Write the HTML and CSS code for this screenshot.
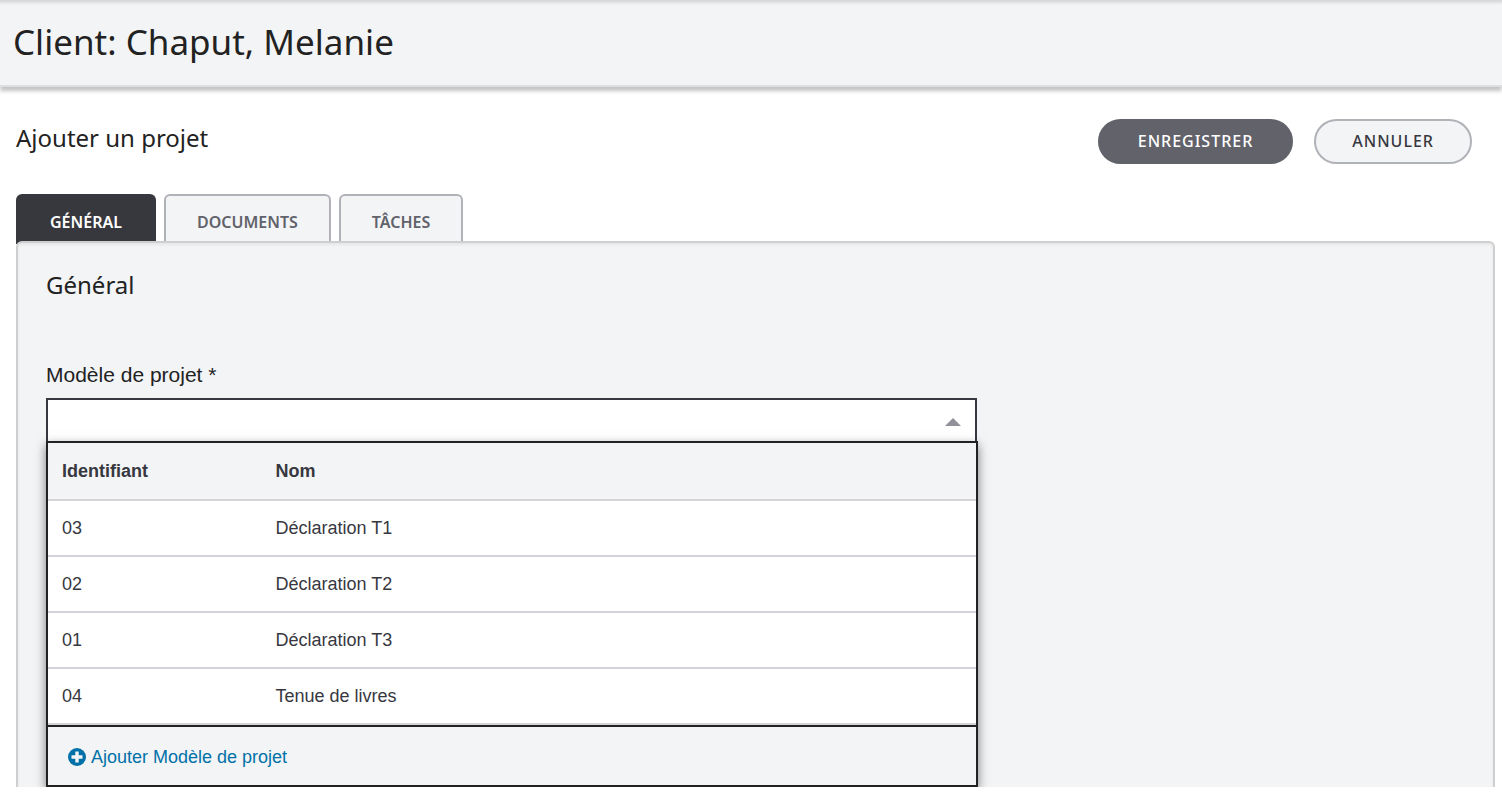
FILE: index.html
```html
<!DOCTYPE html>
<html lang="fr">
<head>
<meta charset="utf-8">
<meta name="viewport" content="width=device-width, initial-scale=1">
<title>Client: Chaput, Melanie</title>
<link rel="stylesheet" href="styles.css">
</head>
<body>
<header class="client-header">
  <h1 class="client-name">Client: Chaput, Melanie</h1>
</header>
<main class="page">
  <div class="page-bar">
    <h2 class="page-title">Ajouter un projet</h2>
    <div class="actions">
      <button type="button" class="btn btn-primary">ENREGISTRER</button>
      <button type="button" class="btn btn-secondary">ANNULER</button>
    </div>
  </div>
  <div class="tabs" role="tablist">
    <button type="button" class="tab tab-active" role="tab" aria-selected="true" aria-controls="general">GÉNÉRAL</button>
    <button type="button" class="tab" role="tab" aria-selected="false">DOCUMENTS</button>
    <button type="button" class="tab" role="tab" aria-selected="false">TÂCHES</button>
  </div>
  <section class="panel" id="general" role="tabpanel">
    <h3 class="panel-title">Général</h3>
    <div class="field">
      <label class="field-label" for="template">Modèle de projet *</label>
      <div class="combo">
        <input class="combo-input" id="template" type="text" role="combobox" aria-expanded="true" aria-controls="template-list" autocomplete="off" required>
        <button type="button" class="combo-toggle" aria-label="Fermer la liste">
          <svg width="16" height="8" viewBox="0 0 16 8" aria-hidden="true"><path d="M0 8L8 0L16 8Z" fill="#919299"/></svg>
        </button>
      </div>
      <div class="dropdown" id="template-list">
        <table class="options">
          <thead>
            <tr><th scope="col" class="col-id">Identifiant</th><th scope="col">Nom</th></tr>
          </thead>
          <tbody>
            <tr><td>03</td><td>Déclaration T1</td></tr>
            <tr><td>02</td><td>Déclaration T2</td></tr>
            <tr><td>01</td><td>Déclaration T3</td></tr>
            <tr><td>04</td><td>Tenue de livres</td></tr>
          </tbody>
        </table>
        <div class="dropdown-footer">
          <a class="add-link" href="#">
            <svg width="18" height="18" viewBox="0 0 18 18" aria-hidden="true"><circle cx="9" cy="9" r="9" fill="#0071a8"/><path d="M9 3.5V14.5M3.5 9H14.5" stroke="#f3f4f6" stroke-width="3.4"/></svg>
            <span>Ajouter Modèle de projet</span>
          </a>
        </div>
      </div>
    </div>
  </section>
</main>
</body>
</html>
```
FILE: styles.css
```css
* {
  box-sizing: border-box;
}

body {
  margin: 0;
  background: #fff;
  color: #222;
  font-family: "Liberation Sans", Arial, sans-serif;
  font-size: 18px;
}

h1, h2, h3 {
  margin: 0;
  font-family: "Noto Sans", "Open Sans", sans-serif;
  font-weight: 400;
}

.client-header {
  padding: 18px 13px 19px;
  background: linear-gradient(#d3d4d6, #f3f4f6 5px);
  border-bottom: 2px solid #dedfe0;
  box-shadow: 0 4px 4px rgba(0, 0, 0, 0.24);
}

.client-name {
  font-size: 35px;
  line-height: 48px;
}

.page {
  padding: 32px 7px 10px 16px;
}

.page-bar {
  display: flex;
  justify-content: space-between;
  align-items: flex-start;
  padding-right: 23px;
}

.page-title {
  font-size: 24px;
  line-height: 38px;
}

.actions {
  display: flex;
  gap: 21px;
}

.btn {
  height: 45px;
  padding: 0 36px 2px;
  border: 2px solid #b1b2b8;
  border-radius: 23px;
  font-family: "Noto Sans", "Open Sans", sans-serif;
  font-size: 16px;
  font-weight: 500;
  letter-spacing: 1px;
}

.btn-primary {
  padding: 0 38px 2px;
  background: #61626a;
  border-color: #61626a;
  color: #fff;
}

.btn-secondary {
  background: #f3f4f6;
  color: #37383f;
}

.tabs {
  display: flex;
  gap: 8px;
  margin-top: 30px;
}

.tab {
  height: 47px;
  padding: 6px 31px 0;
  border: 2px solid #b1b2b8;
  border-bottom: 0;
  border-radius: 6px 6px 0 0;
  background: #f3f4f6;
  color: #61626a;
  font-family: "Noto Sans", "Open Sans", sans-serif;
  font-size: 16px;
  font-weight: 600;
}

.tab-active {
  height: 50px;
  margin-bottom: -3px;
  padding: 6px 32px 3px;
  background: #37383d;
  border-color: #37383d;
  color: #fff;
}

.panel {
  position: relative;
  padding: 26px 28px 0;
  overflow: hidden;
  background: #f3f4f6;
  border: 2px solid #cfcfd0;
  border-bottom: 0;
  border-radius: 6px 6px 0 0;
  box-shadow: inset 0 2px 3px rgba(0, 0, 0, 0.06);
}

.panel-title {
  font-size: 24px;
  line-height: 32px;
}

.field {
  width: calc(66.6667% - 15px);
  margin-top: 62px;
}

.field-label {
  display: block;
  font-size: 21px;
  line-height: 24px;
}

.combo {
  display: flex;
  height: 45px;
  margin-top: 11px;
  background: #fff;
  border: 2px solid #37383f;
}

.combo-input {
  flex: 1;
  min-width: 0;
  padding: 0 14px;
  border: 0;
  background: transparent;
  font: inherit;
  outline: 0;
}

.combo-toggle {
  display: flex;
  align-items: center;
  padding: 3px 14px 0;
  border: 0;
  background: transparent;
}

.dropdown {
  position: relative;
  margin: -2px -1px 0 0;
  background: #fff;
  border: 2px solid #222;
  box-shadow: 0 4px 10px rgba(0, 0, 0, 0.5);
}

.options {
  width: 100%;
  border-collapse: separate;
  border-spacing: 0;
  color: #37383f;
}

.options th,
.options td {
  height: 56px;
  padding: 0 14px;
  border-bottom: 2px solid #d3d3d8;
  text-align: left;
}

.options th {
  height: 58px;
  background: #f3f4f6;
}

.options .col-id {
  width: 23%;
}

.dropdown-footer {
  padding: 19px 20px 17px;
  border-top: 2px solid #222;
  background: #f3f4f6;
}

.add-link {
  display: flex;
  align-items: center;
  gap: 5px;
  color: #0071a8;
  line-height: 22px;
  text-decoration: none;
}
```
